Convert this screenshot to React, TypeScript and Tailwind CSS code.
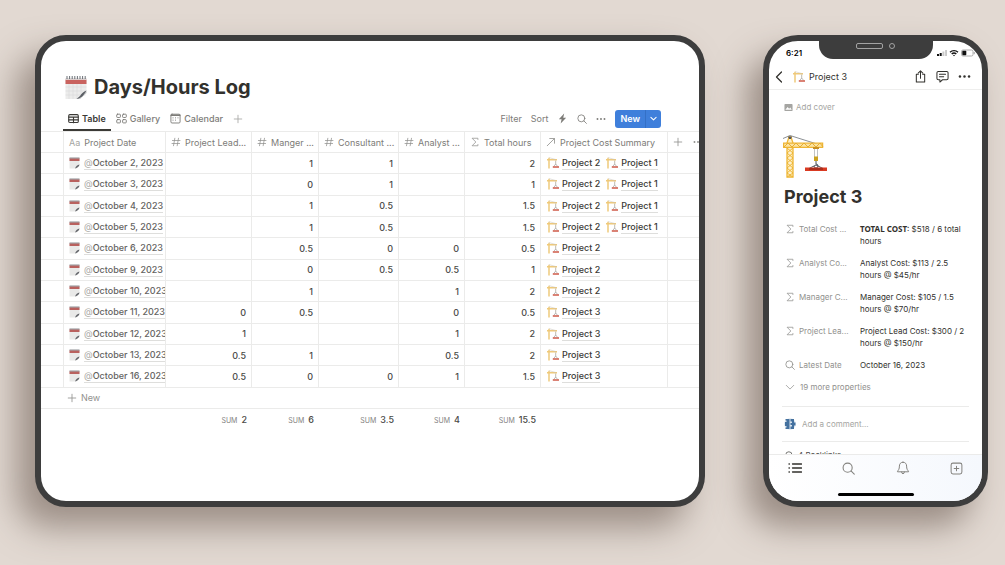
import React from "react";

type IconProps = { className?: string };

const Notepad = ({ className }: IconProps) => (
  <svg viewBox="0 0 22 25" className={className} aria-hidden="true">
    <path d="M.5 4h21v14L15 24H.5z" fill="#ececeb" />
    <path d="M4 9v15M8 9v15M12 9v15M16 9v12M.5 12h21M.5 16h21M.5 20h20" stroke="#d6d6d6" strokeWidth=".5" />
    <path d="M.5 4.500h21V9H.5z" fill="#c9635f" />
    <path d="M.5 3h21v1.800H.5z" fill="#dddbdb" />
    <path d="M2 1v3M4.600 1v3M7.200 1v3M9.800 1v3M12.400 1v3M15 1v3M17.600 1v3M20.200 1v3" stroke="#5b6168" strokeWidth=".9" />
    <path d="M21.500 18 15 24c-1 0-2.500.2-3.500 0 3-1 6-3.500 10-8z" fill="#c9cacb" />
    <path d="M21.500 15.500c-3 1-5 3-6.500 5.500L11.500 24c3-.5 5.500-2 7-4 1.200-1.500 2.200-3 3-4.500z" fill="#5a5e64" />
  </svg>
);

const NotepadSmall = ({ className }: IconProps) => (
  <svg viewBox="0 0 11 12" className={className} aria-hidden="true">
    <path d="M.5 1h10v8L7.500 11.500h-7z" fill="#e9e9e8" />
    <path d="M.5 1.300h10V4H.5z" fill="#b9615e" />
    <path d="M.5.500h10v1H.5z" fill="#8e8f93" />
    <path d="M10.500 7.500c-2 .3-3.700 1.700-4.500 4 2-.3 3.700-1.500 4.500-4z" fill="#63656a" />
  </svg>
);

const Crane = ({ className }: IconProps) => (
  <svg viewBox="0 0 44 44" className={className} fill="none" aria-hidden="true">
    <path d="M0 4.500 7 1.500 34 10" stroke="#6e7379" strokeWidth=".8" />
    <path d="M4 43V9l2-6h2l2 6v34z" fill="#fdf0c9" stroke="#eeb534" strokeWidth="1.300" />
    <path d="m4 14 6 5-6 5 6 5-6 5 6 5-6 4M10 14l-6 5 6 5-6 5 6 5-6 5 6 4" stroke="#eeb534" strokeWidth="1" />
    <path d="M.6 9.200h39v4.200H.6z" fill="#fbe3a0" stroke="#eeb534" strokeWidth="1.300" />
    <path d="m1 13 4-4 4 4 4-4 4 4 4-4 4 4 4-4 4 4 4-4 3 4" stroke="#e8ad30" strokeWidth="1" />
    <path d="M5 2.500h4L8 5H6z" fill="#54575b" />
    <path d="M30 13h6v2h-6z" fill="#c88f23" />
    <path d="M31.500 15v8M34.500 15v8" stroke="#b9bcc0" strokeWidth=".9" />
    <path d="M31 22.500h4V27h-4z" fill="#caa21f" />
    <path d="M33 27v3.500M33 30a2 2 0 1 1-2 2M33 31l-8 4M33 31l8 4" stroke="#4c545d" strokeWidth="1" />
    <path d="M22 33.500h22V37H22z" fill="#d93a22" />
    <path d="M26 35h14" stroke="#7d2317" strokeWidth="1" />
  </svg>
);

const CraneSmall = ({ className }: IconProps) => (
  <svg viewBox="0 0 12 12" className={className} fill="none" aria-hidden="true">
    <path d="M2 .8V11.500" stroke="#f1d391" strokeWidth="1.800" />
    <path d="M0 2.700h10" stroke="#efc979" strokeWidth="1.400" />
    <path d="m2 .6 7 2" stroke="#c5c1b8" strokeWidth=".5" />
    <path d="M8.700 3.500V7" stroke="#b8b3a5" strokeWidth=".9" />
    <path d="m8.700 7-2 2.500M8.700 7l2 2.500" stroke="#8d8c88" strokeWidth=".6" />
    <path d="M5.800 9.900h6.200" stroke="#cf5a49" strokeWidth="1.500" />
  </svg>
);

const Svg = ({
  className,
  box = 12,
  width = 1,
  children,
}: IconProps & { box?: number; width?: number; children: React.ReactNode }) => (
  <svg
    viewBox={`0 0 ${box} ${box}`}
    className={className}
    fill="none"
    stroke="currentColor"
    strokeWidth={width}
    strokeLinecap="round"
    strokeLinejoin="round"
    aria-hidden="true"
  >
    {children}
  </svg>
);

const Hash = () => (
  <Svg className="size-[10px] shrink-0 text-[#91918e]" width={0.9}>
    <path d="M4.600 1.500 3 10.500M9 1.500l-1.600 9M1.700 4.200h9.100M1.200 7.800h9.100" />
  </Svg>
);
const Sigma = () => (
  <Svg className="size-[10px] shrink-0 text-[#91918e]" width={0.9}>
    <path d="M9.500 3V1.500h-7L7 6l-4.500 4.500h7V9" />
  </Svg>
);
const Arrow = () => (
  <Svg className="size-[10px] shrink-0 text-[#91918e]" width={1}>
    <path d="M1.500 10.500 10 2M4.500 1.800H10.200V7.500" />
  </Svg>
);
const Plus = ({ className }: IconProps) => (
  <Svg className={className} width={1}>
    <path d="M6 1.500v9M1.500 6h9" />
  </Svg>
);
const Search = ({ className }: IconProps) => (
  <Svg className={className} width={1}>
    <circle cx="5.200" cy="5.200" r="4.200" />
    <path d="m8.300 8.300 3 3" />
  </Svg>
);
const Dots = ({ className }: IconProps) => (
  <svg viewBox="0 0 12 12" className={className} fill="currentColor" aria-hidden="true">
    <circle cx="1.800" cy="6" r="1.150" />
    <circle cx="6" cy="6" r="1.150" />
    <circle cx="10.200" cy="6" r="1.150" />
  </svg>
);

const columns: { name: string; icon: React.ReactNode }[] = [
  { name: "Project Date", icon: <span className="text-[#a5a5a2]">Aa</span> },
  { name: "Project Lead...", icon: <Hash /> },
  { name: "Manger ...", icon: <Hash /> },
  { name: "Consultant ...", icon: <Hash /> },
  { name: "Analyst ...", icon: <Hash /> },
  { name: "Total hours", icon: <Sigma /> },
  { name: "Project Cost Summary", icon: <Arrow /> },
];

const rows: { date: string; values: string[]; projects: string[] }[] = [
  { date: "October 2, 2023", values: ["", "1", "1", "", "2"], projects: ["Project 2", "Project 1"] },
  { date: "October 3, 2023", values: ["", "0", "1", "", "1"], projects: ["Project 2", "Project 1"] },
  { date: "October 4, 2023", values: ["", "1", "0.5", "", "1.5"], projects: ["Project 2", "Project 1"] },
  { date: "October 5, 2023", values: ["", "1", "0.5", "", "1.5"], projects: ["Project 2", "Project 1"] },
  { date: "October 6, 2023", values: ["", "0.5", "0", "0", "0.5"], projects: ["Project 2"] },
  { date: "October 9, 2023", values: ["", "0", "0.5", "0.5", "1"], projects: ["Project 2"] },
  { date: "October 10, 2023", values: ["", "1", "", "1", "2"], projects: ["Project 2"] },
  { date: "October 11, 2023", values: ["0", "0.5", "", "0", "0.5"], projects: ["Project 3"] },
  { date: "October 12, 2023", values: ["1", "", "", "1", "2"], projects: ["Project 3"] },
  { date: "October 13, 2023", values: ["0.5", "1", "", "0.5", "2"], projects: ["Project 3"] },
  { date: "October 16, 2023", values: ["0.5", "0", "0", "1", "1.5"], projects: ["Project 3"] },
];

const sums = ["2", "6", "3.5", "4", "15.5"];

const line = "border-b border-[#ebebea] p-0";
const cell = "border-b border-r border-[#ebebea] p-0";

const LogTable = () => (
  <table className="h-[299px] w-full table-fixed border-separate border-spacing-0 text-[9px] leading-[13px] whitespace-nowrap">
    <colgroup>
      <col className="w-[23px]" />
      <col className="w-[102px]" />
      <col className="w-[86px]" />
      <col className="w-[67px]" />
      <col className="w-[80px]" />
      <col className="w-[66px]" />
      <col className="w-[76px]" />
      <col className="w-[127px]" />
      <col />
    </colgroup>
    <thead>
      <tr className="h-[22px] text-[#7d7c78]">
        <td className={`${cell} border-t`} />
        {columns.map((c) => (
          <th key={c.name} scope="col" className={`${cell} border-t text-left font-normal`}>
            <div className="flex items-center gap-1 overflow-hidden px-[5px]">
              {c.icon}
              <span>{c.name}</span>
            </div>
          </th>
        ))}
        <td className={`${line} border-t`}>
          <div className="flex items-center gap-[10px] overflow-hidden pl-[5px] text-[#91918e]">
            <button type="button" aria-label="Add property" className="shrink-0">
              <Plus className="size-[10px]" />
            </button>
            <button type="button" aria-label="Property options" className="shrink-0">
              <Dots className="size-[10px]" />
            </button>
          </div>
        </td>
      </tr>
    </thead>
    <tbody>
      {rows.map((r) => (
        <tr key={r.date} className="h-[21px] font-medium text-[#4a4946]">
          <td className={cell} />
          <td className={cell}>
            <div className="flex items-center gap-1 overflow-hidden pl-[5px]">
              <NotepadSmall className="h-[12px] w-[11px] shrink-0" />
              <a href="#log" className="border-b border-[#dededc] text-[#64635f]">
                <span className="font-normal text-[#a8a7a4]">@</span>
                {r.date}
              </a>
            </div>
          </td>
          {r.values.map((v, i) => (
            <td key={i} className={`${cell} pr-[5px] text-right`}>
              {v}
            </td>
          ))}
          <td className={cell}>
            <div className="flex items-center gap-[6px] overflow-hidden pl-[6px]">
              {r.projects.map((p) => (
                <a key={p} href="#project" className="flex items-center gap-[3px]">
                  <CraneSmall className="size-[12px] shrink-0" />
                  <span className="border-b border-[#dededc] text-[#3b3a36]">{p}</span>
                </a>
              ))}
            </div>
          </td>
          <td className={line} />
        </tr>
      ))}
      <tr className="h-[21px]">
        <td className={line} />
        <td colSpan={8} className={line}>
          <button type="button" className="flex items-center gap-1 pl-[3px] text-[#91918e]">
            <Plus className="size-[10px]" />
            New
          </button>
        </td>
      </tr>
    </tbody>
    <tfoot>
      <tr className="h-[21px] text-right font-medium text-[#4a4946]">
        <td />
        <td />
        {sums.map((s) => (
          <td key={s} className="p-0 pr-[5px]">
            <span className="mr-1 text-[7px] font-normal text-[#84837f]">SUM</span>
            {s}
          </td>
        ))}
        <td />
        <td />
      </tr>
    </tfoot>
  </table>
);

const tab = "flex items-center gap-[3px] border-b-2 px-[5px] pt-[2px]";

const Tablet = () => (
  <main className="min-w-0 flex-1 overflow-hidden rounded-[31px] border-6 border-[#3d3d3d] bg-white pt-[31px] shadow-[-18px_20px_34px_rgba(85,68,58,0.5)]">
    <div className="flex items-center gap-[7px] pl-6">
      <Notepad className="h-[25px] w-[22px]" />
      <h1 className="text-[20px] leading-[30px] font-bold text-[#32312d]">Days/Hours Log</h1>
    </div>
    <div className="mt-[4px] flex h-[25px] items-stretch justify-between pr-[38px] pl-[22px] text-[9px] text-[#7d7c78]">
      <nav className="flex items-stretch font-medium">
        <a href="#table" className={`${tab} border-[#3b3a36] font-semibold text-[#3b3a36]`}>
          <Svg className="size-[11px]" width={1.2}>
            <rect x=".8" y="1.800" width="10.400" height="8.600" rx="1.200" />
            <path d="M.8 4.500h10.400M.8 7.500h10.400M6 4.500v6" />
          </Svg>
          Table
        </a>
        <a href="#gallery" className={`${tab} border-transparent`}>
          <Svg className="size-[11px]">
            <rect x=".8" y="1.300" width="4" height="3.600" rx=".8" />
            <rect x="7.200" y="1.300" width="4" height="3.600" rx=".8" />
            <rect x=".8" y="7.200" width="4" height="3.600" rx=".8" />
            <rect x="7.200" y="7.200" width="4" height="3.600" rx=".8" />
          </Svg>
          Gallery
        </a>
        <a href="#calendar" className={`${tab} border-transparent`}>
          <Svg className="size-[11px]">
            <rect x="1" y="1.300" width="10" height="9.600" rx="1.200" />
            <path d="M1.200 2.400h9.600" strokeWidth="1.600" />
            <path d="M3.200 5.300h.2M5.900 5.300h.2M8.600 5.300h.2M3.200 7.800h.2M5.900 7.800h.2" />
          </Svg>
          Calendar
        </a>
        <button type="button" aria-label="Add view" className={`${tab} border-transparent text-[#a5a5a2]`}>
          <Plus className="size-[10px]" />
        </button>
      </nav>
      <div className="flex items-center gap-[9px]">
        <button type="button">Filter</button>
        <button type="button">Sort</button>
        <button type="button" aria-label="Automations">
          <svg viewBox="0 0 12 12" className="size-[11px]" fill="currentColor" aria-hidden="true">
            <path d="M7.800.500 2 6.700h3L4 11.500 10 5.200H6.800z" />
          </svg>
        </button>
        <button type="button" aria-label="Search">
          <Search className="size-[10px]" />
        </button>
        <button type="button" aria-label="More options">
          <Dots className="size-[10px]" />
        </button>
        <div className="flex h-[18px] items-stretch overflow-hidden rounded-[3px] bg-[#3f7fdb] text-white">
          <button type="button" className="border-r border-[#3470c6] px-[5px] font-semibold">
            New
          </button>
          <button type="button" aria-label="New from template" className="px-1">
            <Svg className="size-[7px]" width={1.8}>
              <path d="m1.500 4 4.500 4.500L10.500 4" />
            </Svg>
          </button>
        </div>
      </div>
    </div>
    <LogTable />
  </main>
);

const properties: { name: string; value: React.ReactNode }[] = [
  {
    name: "Total Cost ...",
    value: (
      <>
        <b className="font-['Noto_Sans',sans-serif] font-bold">TOTAL COST</b>: $518 / 6 total hours
      </>
    ),
  },
  { name: "Analyst Co...", value: "Analyst Cost: $113 / 2.5 hours @ $45/hr" },
  { name: "Manager C...", value: "Manager Cost: $105 / 1.5 hours @ $70/hr" },
  { name: "Project Lea...", value: "Project Lead Cost: $300 / 2 hours @ $150/hr" },
];

const Phone = () => (
  <aside className="flex w-[225px] shrink-0 flex-col overflow-hidden rounded-[35px] border-6 border-[#3d3d3d] bg-white shadow-[-16px_20px_32px_rgba(85,68,58,0.5)]">
    <div className="grid grid-cols-[minmax(0,1fr)_114px_minmax(0,1fr)]">
      <div className="flex items-center pt-[5px] pl-[17px] text-[8px] font-semibold text-black">6:21</div>
      <div className="flex h-[18px] items-center justify-center gap-[6px] rounded-b-[14px] bg-[#3d3d3d] pb-[9px]">
        <span className="h-[6px] w-[27px] rounded-[2px] border border-[#a3a3a3]" />
        <span className="size-[6px] rounded-full border border-[#a3a3a3]" />
      </div>
      <div className="flex items-center gap-[2px] pt-[5px] pl-1">
        <svg viewBox="0 0 10 8" className="h-[8px] w-[10px] shrink-0" aria-hidden="true">
          <path d="M0 5h2v2H0zM2.700 4h2v3h-2z" fill="#111" />
          <path d="M5.400 2.500h2V7h-2zM8.100 1h1.900v6H8.100z" fill="#c9c9c9" />
        </svg>
        <svg viewBox="0 0 10 8" className="h-[8px] w-[10px] shrink-0" fill="none" stroke="#111" strokeWidth="1.400" aria-hidden="true">
          <path d="M1 3.300a5.700 5.700 0 0 1 8 0M2.700 5.100a3.300 3.300 0 0 1 4.600 0" />
          <path d="M4 6.200a1.400 1.400 0 0 1 2 0L5 7.300z" fill="#111" stroke="none" />
        </svg>
        <svg viewBox="0 0 14 8" className="h-[8px] w-[14px] shrink-0" aria-hidden="true">
          <rect x=".5" y="1" width="11.500" height="6" rx="1.500" fill="none" stroke="#9b9b9b" strokeWidth=".8" />
          <rect x="1.300" y="1.800" width="4" height="4.400" rx=".7" fill="#111" />
          <path d="M13.200 3v2.200" stroke="#9b9b9b" />
        </svg>
      </div>
    </div>

    <header className="flex h-[31px] items-center border-b border-[#eeeeed] px-[5px] pt-[5px] text-[#32312d]">
      <button type="button" aria-label="Back">
        <Svg className="size-[12px]" width={1.3}>
          <path d="M7.500 1 2.500 6l5 5" />
        </Svg>
      </button>
      <CraneSmall className="ml-[7px] size-[12px]" />
      <span className="ml-1 flex-1 text-[9px]">Project 3</span>
      <div className="flex items-center gap-[9px] pr-[6px]">
        <button type="button" aria-label="Share">
          <Svg className="size-[13px]" box={14} width={1.1}>
            <path d="M4.700 4.500H2.500v8.500h9V4.500H9.300M7 9V1M4.500 3.300 7 .9l2.500 2.400" />
          </Svg>
        </button>
        <button type="button" aria-label="Comments">
          <Svg className="size-[13px]" box={14} width={1.1}>
            <path d="M2.500 1.500h9q1.500 0 1.500 1.500v6q0 1.500-1.500 1.500H7L4.200 13v-2.500H2.500Q1 10.500 1 9V3q0-1.500 1.500-1.500zM3.700 4.500h6.600M3.700 7.200h4.600" />
          </Svg>
        </button>
        <button type="button" aria-label="More">
          <Dots className="size-[13px]" />
        </button>
      </div>
    </header>

    <section className="px-[15px] pt-[10px] text-[8px] leading-[12px] text-[#32312d]">
      <button type="button" className="flex h-[14px] items-center gap-[3px] text-[#a5a5a2]">
        <svg viewBox="0 0 10 10" className="size-[9px]" aria-hidden="true">
          <rect x=".5" y="1" width="9" height="8" rx="1" fill="#a5a5a2" />
          <path d="m1.500 7.500 2.500-3 1.700 2L7 5l1.600 2.500z" fill="#fff" />
        </svg>
        Add cover
      </button>
      <Crane className="mt-[20px] -ml-[1px] size-[44px]" />
      <h2 className="mt-[7px] text-[18px] leading-[24px] font-bold">Project 3</h2>
      <dl className="mt-[14px] flex flex-col gap-[10px]">
        {properties.map((p) => (
          <div key={p.name} className="flex">
            <dt className="flex h-[12px] w-[76px] shrink-0 items-center gap-1 pl-[1px] whitespace-nowrap text-[#91918e]">
              <Sigma />
              {p.name}
            </dt>
            <dd className="min-w-0 flex-1">{p.value}</dd>
          </div>
        ))}
        <div className="flex">
          <dt className="flex w-[76px] shrink-0 items-center gap-1 pl-[1px] whitespace-nowrap text-[#91918e]">
            <Search className="size-[10px] shrink-0" />
            Latest Date
          </dt>
          <dd>October 16, 2023</dd>
        </div>
      </dl>
      <button type="button" className="mt-[10px] flex items-center gap-[5px] pl-[1px] text-[#91918e]">
        <Svg className="size-[10px]" width={0.9}>
          <path d="m1.500 4 4.500 4.500L10.500 4" />
        </Svg>
        19 more properties
      </button>
      <div className="-mx-[2px] mt-[13px] flex h-[36px] items-center gap-[6px] border-y border-[#ebebea] px-[2px] text-[#a5a5a2]">
        <svg viewBox="0 0 12 12" className="size-[12px] shrink-0" aria-hidden="true">
          <circle cx="6" cy="6" r="5.800" fill="#d9e3ec" />
          <path d="M1.500 1h4v10h-4V9.500H2.500V8H1V4h1.500V2.500h-1zM6.500 1H10v3.500h1.500V7.500H10V11H6.500V8.500H8V7H6.500V5H8V3.500H6.500z" fill="#44719f" />
        </svg>
        <input
          type="text"
          aria-label="Add a comment"
          placeholder="Add a comment..."
          className="w-full bg-transparent outline-none placeholder:text-[#a5a5a2]"
        />
      </div>
      <div className="flex h-[12px] items-start gap-1 overflow-hidden pt-[7px] pl-[1px] text-[#4a4946]">
        <Search className="mt-[2px] size-[9px] shrink-0" />
        4 Backlinks
      </div>
    </section>

    <nav className="flex h-[47px] flex-col border-t border-[#ebebea] bg-linear-to-r from-white to-[#f5f8fd] text-[#84837f]">
      <div className="flex items-center justify-between px-[19px] pt-[6px]">
        <a href="#home" aria-label="Home" className="text-[#32312d]">
          <Svg className="size-[14px]" box={14} width={1.3}>
            <path d="M4.500 3h9M4.500 7h9M4.500 11h9M1 3h.4M1 7h.4M1 11h.4" />
          </Svg>
        </a>
        <a href="#search" aria-label="Search">
          <Search className="size-[13px]" />
        </a>
        <a href="#updates" aria-label="Updates">
          <Svg className="size-[14px]" box={14} width={1}>
            <path d="M7 1.200c-2.500 0-3.600 1.900-3.600 3.900 0 3-.9 4-1.900 5v.7h11v-.7c-1-1-1.900-2-1.900-5 0-2-1.100-3.900-3.600-3.900zM5.600 11q.2 1.800 1.400 1.800T8.400 11" />
          </Svg>
        </a>
        <a href="#new" aria-label="New page">
          <Svg className="size-[13px]" box={14} width={1.1}>
            <rect x="1.200" y="1.200" width="11.600" height="11.600" rx="2" />
            <path d="M7 4.500v5M4.500 7h5" />
          </Svg>
        </a>
      </div>
      <span className="mt-auto mb-[5px] h-[3px] w-[76px] self-center rounded-full bg-black" />
    </nav>
  </aside>
);

export default function App() {
  return (
    <div className="flex min-h-screen items-start bg-[#e2d9d2] font-['Inter','Liberation_Sans',sans-serif]">
      <div className="flex min-w-0 flex-1 items-stretch gap-[58px] py-[35px] pr-[17px] pl-[35px]">
        <Tablet />
        <Phone />
      </div>
    </div>
  );
}
